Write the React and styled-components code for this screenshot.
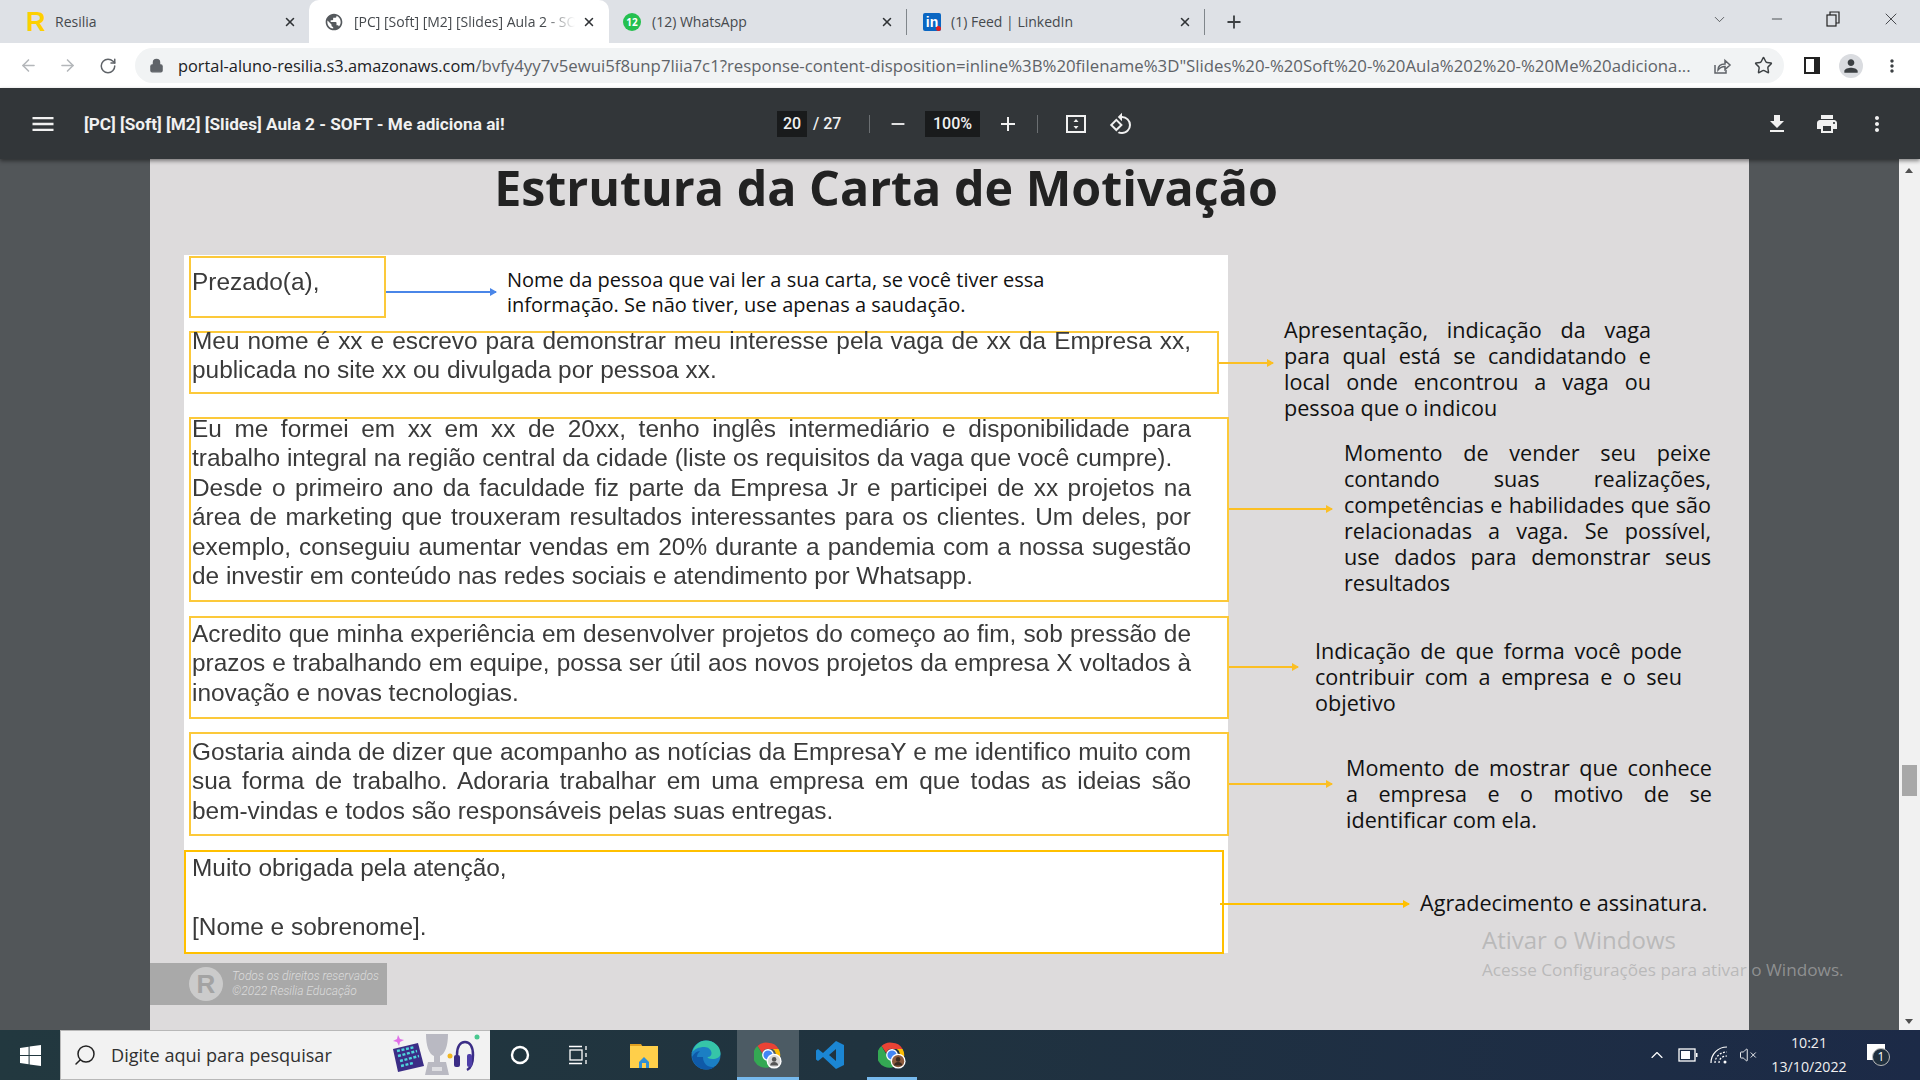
import React from 'react';
import styled, { createGlobalStyle } from 'styled-components';
import { ArrowLeft, ArrowRight, RotateCw, X, Plus, Minus, ChevronDown, ChevronUp, Star, Lock, Search, VolumeX } from 'lucide-react';
import { MdMenu, MdFileDownload, MdPrint, MdMoreVert, MdRemove, MdAdd, MdRotate90DegreesCcw, MdPerson, MdPublic } from 'react-icons/md';

const GlobalStyle = createGlobalStyle`
  html, body {
    margin: 0;
    padding: 0;
    width: 1920px;
    height: 1080px;
    overflow: hidden;
    font-family: "Open Sans", "Liberation Sans", sans-serif;
  }
  * { box-sizing: border-box; }
`;

const Screen = styled.div`
  position: relative;
  width: 1920px;
  height: 1080px;
  display: flex;
  flex-direction: column;
  overflow: hidden;
`;

/* ---- chrome tabs ---- */
const TabStrip = styled.div`
  height: 43px;
  background: #dee1e6;
  display: flex;
  align-items: stretch;
  padding-left: 4px;
`;
const Tab = styled.div`
  position: relative;
  width: ${p => p.$width}px;
  display: flex;
  align-items: center;
  padding-left: ${p => p.$pad}px;
  background: ${p => (p.$active ? '#ffffff' : 'transparent')};
  border-radius: 10px 10px 0 0;
  ${p => p.$divider && `
    &::after {
      content: '';
      position: absolute;
      right: 0;
      top: 9px;
      height: 26px;
      width: 1px;
      background: #80868b;
    }
  `}
`;
const TabTitle = styled.span`
  flex: 1;
  min-width: 0;
  margin-left: ${p => p.$gap || 12}px;
  font-size: 14px;
  color: #45494d;
  white-space: nowrap;
  overflow: hidden;
  ${p => p.$fade && `
    margin-right: 6px;
    -webkit-mask-image: linear-gradient(90deg, #000 86%, transparent);
  `}
`;
const TabClose = styled.span`
  flex: none;
  width: 16px;
  height: 16px;
  margin-right: ${p => p.$right}px;
  display: flex;
  align-items: center;
  justify-content: center;
  color: #303336;
`;
const FavLetter = styled.span`
  width: 18px;
  font-family: "Liberation Sans", sans-serif;
  font-weight: 700;
  font-size: 27px;
  line-height: 24px;
  color: #fdd000;
`;
const NewTab = styled.span`
  margin-left: 19px;
  display: flex;
  align-items: center;
  color: #3c4043;
`;
const WindowControls = styled.div`
  margin-left: auto;
  display: flex;
  align-items: center;
  height: 38px;
  padding-right: 19px;
  gap: 41px;
  color: #2a2d30;
`;

/* ---- address bar ---- */
const AddressBar = styled.div`
  height: 45px;
  background: #ffffff;
  display: flex;
  align-items: center;
  padding-left: 18px;
`;
const NavIcon = styled.span`
  flex: none;
  width: 20px;
  height: 20px;
  margin-left: ${p => p.$left || 0}px;
  display: flex;
  align-items: center;
  justify-content: center;
  color: ${p => p.$color || '#5f6368'};
`;
const Omnibox = styled.div`
  width: 1649px;
  height: 35px;
  margin-left: 17px;
  background: #f1f3f4;
  border-radius: 18px;
  display: flex;
  align-items: center;
  padding: 0 11px 0 14px;
`;
const Url = styled.div`
  flex: 1;
  min-width: 0;
  margin-left: 14px;
  font-size: 16.8px;
  color: #5f6368;
  white-space: nowrap;
  overflow: hidden;
  b {
    font-weight: 400;
    font-size: 16.35px;
    color: #202124;
  }
`;
const SidePanel = styled.span`
  width: 16px;
  height: 17px;
  margin-left: 20px;
  border: 2px solid #222;
  border-right-width: 6px;
  background: #fff;
`;
const Avatar = styled.span`
  width: 24px;
  height: 24px;
  margin-left: 19px;
  border-radius: 50%;
  background: #dadce0;
  display: flex;
  align-items: center;
  justify-content: center;
  color: #3c4043;
`;

/* ---- pdf toolbar ---- */
const PdfBar = styled.div`
  position: relative;
  z-index: 2;
  height: 71px;
  background: #323639;
  box-shadow: 0 2px 4px rgba(0, 0, 0, 0.45);
  display: flex;
  align-items: center;
  color: #f1f1f1;
`;
const PdfLeft = styled.div`
  width: 777px;
  display: flex;
  align-items: center;
  padding-left: 29px;
`;
const DocTitle = styled.span`
  margin-left: 27px;
  font-family: Roboto, sans-serif;
  font-weight: 700;
  font-size: 17.2px;
  white-space: nowrap;
`;
const NumBox = styled.span`
  width: ${p => p.$width}px;
  height: 26px;
  margin-left: ${p => p.$left || 0}px;
  background: #191b1c;
  display: flex;
  align-items: center;
  justify-content: center;
  font-family: Roboto, sans-serif;
  font-weight: 500;
  font-size: 16px;
`;
const PageCount = styled.span`
  margin-left: 6px;
  width: 32px;
  font-family: Roboto, sans-serif;
  font-weight: 500;
  font-size: 16px;
  white-space: nowrap;
`;
const BarDivider = styled.span`
  width: 1px;
  height: 18px;
  margin-left: ${p => p.$left}px;
  background: #6b6f72;
`;
const BarIcon = styled.span`
  width: ${p => p.$size || 24}px;
  height: ${p => p.$size || 24}px;
  margin-left: ${p => p.$left || 0}px;
  display: flex;
  align-items: center;
  justify-content: center;
`;
const PdfRight = styled.div`
  margin-left: auto;
  padding-right: 31px;
  display: flex;
  align-items: center;
  gap: 26px;
`;

/* ---- pdf viewer ---- */
const Viewer = styled.div`
  height: 871px;
  display: flex;
`;
const ViewerBody = styled.div`
  flex: 1;
  background: #525659;
  padding-left: 150px;
`;
const Page = styled.div`
  position: relative;
  width: 1599px;
  height: 871px;
  background: #dddbdc;
  overflow: hidden;
`;
const SlideTitle = styled.h1`
  margin: 0;
  height: 56px;
  width: 1472px;
  text-align: center;
  font-family: "Open Sans", sans-serif;
  font-weight: 700;
  font-size: 48.4px;
  line-height: 56px;
  color: #222222;
  white-space: nowrap;
`;
const Slide = styled.div`
  position: relative;
  margin-top: 41px;
  &::before {
    content: '';
    position: absolute;
    left: 34px;
    top: -1px;
    width: 1044px;
    height: 698px;
    background: #ffffff;
  }
`;
const Row = styled.div`
  position: relative;
  height: ${p => p.$height}px;
  margin-top: ${p => p.$top}px;
  padding-left: ${p => p.$inset}px;
  display: flex;
  align-items: center;
`;
const LetterBox = styled.div`
  flex: none;
  align-self: stretch;
  width: ${p => p.$width}px;
  border: 2px solid ${p => p.$color || '#fcc93a'};
  padding-left: ${p => p.$textLeft || 1}px;
`;
const LetterText = styled.div`
  margin-top: ${p => p.$offset}px;
  width: 999px;
  font-family: "Liberation Sans", Arial, sans-serif;
  font-size: 24.4px;
  line-height: 29.4px;
  color: #3a3a3a;
  filter: blur(0.3px);
`;
const TextLine = styled.div`
  white-space: nowrap;
  text-align: ${p => (p.$justify ? 'justify' : 'left')};
  text-align-last: ${p => (p.$justify ? 'justify' : 'left')};
`;
const Arrow = styled.div`
  position: relative;
  flex: none;
  width: ${p => p.$width}px;
  height: 2px;
  margin-left: ${p => p.$left || 0}px;
  margin-top: ${p => p.$shift || 0}px;
  background: ${p => p.$color};
  &::after {
    content: '';
    position: absolute;
    right: -1px;
    top: -3px;
    border-left: 7px solid ${p => p.$color};
    border-top: 4px solid transparent;
    border-bottom: 4px solid transparent;
  }
`;
const Note = styled.div`
  flex: none;
  width: ${p => p.$width}px;
  margin-left: ${p => p.$left}px;
  margin-top: ${p => p.$shift || 0}px;
  font-size: ${p => p.$size || 21.6}px;
  line-height: ${p => p.$leading || 26}px;
  color: #111111;
`;
const Badge = styled.div`
  position: absolute;
  left: 0;
  top: 804px;
  width: 237px;
  height: 42px;
  background: #a9a9a9;
  display: flex;
  align-items: center;
  padding-left: 39px;
`;
const BadgeLogo = styled.span`
  width: 34px;
  height: 34px;
  border-radius: 50%;
  background: #cbcbcb;
  color: #a3a3a3;
  display: flex;
  align-items: center;
  justify-content: center;
  font-family: "Liberation Sans", sans-serif;
  font-weight: 700;
  font-size: 26px;
`;
const BadgeText = styled.div`
  margin-left: 9px;
  font-family: Roboto, sans-serif;
  font-style: italic;
  font-weight: 300;
  font-size: 12px;
  line-height: 15px;
  color: #dcdcdc;
  white-space: nowrap;
`;
const Scrollbar = styled.div`
  position: relative;
  width: 21px;
  background: #f1f1f1;
`;
const ScrollArrow = styled.span`
  position: absolute;
  left: 6px;
  ${p => (p.$up ? 'top: 9px;' : 'bottom: 6px;')}
  border-left: 4.5px solid transparent;
  border-right: 4.5px solid transparent;
  ${p => (p.$up ? 'border-bottom' : 'border-top')}: 5px solid #505050;
`;
const ScrollThumb = styled.span`
  position: absolute;
  left: 3px;
  top: 606px;
  width: 15px;
  height: 31px;
  background: #a8a8a8;
`;
const Watermark = styled.div`
  position: absolute;
  left: 1482px;
  top: 922px;
  z-index: 3;
  font-size: 24px;
  line-height: 36px;
  color: rgba(170, 170, 170, 0.7);
  white-space: nowrap;
  pointer-events: none;
  small {
    display: block;
    font-size: 17.2px;
    line-height: 24px;
  }
`;

/* ---- taskbar ---- */
const Taskbar = styled.div`
  height: 50px;
  background: linear-gradient(90deg, #22383f, #20333f 45%, #1c2a47);
  display: flex;
  align-items: stretch;
`;
const StartButton = styled.div`
  width: 60px;
  display: flex;
  align-items: center;
  justify-content: center;
`;
const SearchBox = styled.div`
  width: 430px;
  background: #f2f2f2;
  border: 1px solid #b8b8b8;
  border-width: 1px 0 1px 1px;
  display: flex;
  align-items: center;
  padding-left: 12px;
  color: #222;
  overflow: hidden;
`;
const SearchHint = styled.span`
  margin-left: 14px;
  font-size: 18.1px;
  color: #303030;
  white-space: nowrap;
`;
const TaskSlot = styled.div`
  position: relative;
  width: ${p => p.$width}px;
  margin-left: ${p => p.$left || 0}px;
  display: flex;
  align-items: center;
  justify-content: center;
  background: ${p => (p.$active ? '#4c5b64' : 'transparent')};
  ${p => p.$bar && `
    &::after {
      content: '';
      position: absolute;
      left: ${p.$active ? 0 : 6}px;
      right: ${p.$active ? 0 : 6}px;
      bottom: 0;
      height: 3px;
      background: #76b9ed;
    }
  `}
`;
const Tray = styled.div`
  margin-left: auto;
  padding-right: 25px;
  display: flex;
  align-items: center;
  color: #ffffff;
`;
const TraySlot = styled.span`
  width: ${p => p.$width || 31}px;
  display: flex;
  align-items: center;
  justify-content: center;
`;
const Clock = styled.div`
  width: 88px;
  margin: 0 4px 0 3px;
  text-align: center;
  font-size: 14.2px;
  line-height: 24px;
  color: #f0f0f0;
`;
const NotifyCount = styled.span`
  position: absolute;
  right: -5px;
  bottom: -6px;
  width: 18px;
  height: 18px;
  border-radius: 50%;
  background: #20303f;
  border: 1px solid #bbb;
  color: #fff;
  font-size: 12px;
  line-height: 16px;
  text-align: center;
`;
const NotifyIcon = styled.span`
  position: relative;
  display: block;
  width: 18px;
  height: 16px;
  background: #fff;
  margin-top: -6px;
`;

const GOLD = '#fbbf24';

const rows = [
  {
    height: 62, top: 0, inset: 39, boxWidth: 197, textTop: 9,
    lines: [['Prezado(a),']],
    arrow: { width: 110, color: '#4a86e8', shift: 9 },
    note: {
      width: 560, left: 11, size: 20, leading: 24.5, shift: 11,
      lines: [['Nome da pessoa que vai ler a sua carta, se você tiver essa'], ['informação. Se não tiver, use apenas a saudação.']],
    },
  },
  {
    height: 63, top: 13, inset: 39, boxWidth: 1030, textTop: -7,
    lines: [['Meu nome é xx e escrevo para demonstrar meu interesse pela vaga de xx da Empresa xx,', true], ['publicada no site xx ou divulgada por pessoa xx.']],
    arrow: { width: 54, color: GOLD },
    note: {
      width: 367, left: 11, shift: 12,
      lines: [['Apresentação, indicação da vaga', true], ['para qual está se candidatando e', true], ['local onde encontrou a vaga ou', true], ['pessoa que o indicou']],
    },
  },
  {
    height: 185, top: 23, inset: 39, boxWidth: 1040, textTop: -5,
    lines: [
      ['Eu me formei em xx em xx de 20xx, tenho inglês intermediário e disponibilidade para', true],
      ['trabalho integral na região central da cidade (liste os requisitos da vaga que você cumpre).'],
      ['Desde o primeiro ano da faculdade fiz parte da Empresa Jr e participei de xx projetos na', true],
      ['área de marketing que trouxeram resultados interessantes para os clientes. Um deles, por', true],
      ['exemplo, conseguiu aumentar vendas em 20% durante a pandemia com a nossa sugestão', true],
      ['de investir em conteúdo nas redes sociais e atendimento por Whatsapp.'],
    ],
    arrow: { width: 103, color: GOLD, shift: -2 },
    note: {
      width: 367, left: 12, shift: 17,
      lines: [['Momento de vender seu peixe', true], ['contando suas realizações,', true], ['competências e habilidades que são', true], ['relacionadas a vaga. Se possível,', true], ['use dados para demonstrar seus', true], ['resultados']],
    },
  },
  {
    height: 103, top: 14, inset: 39, boxWidth: 1040, textTop: 1,
    lines: [
      ['Acredito que minha experiência em desenvolver projetos do começo ao fim, sob pressão de', true],
      ['prazos e trabalhando em equipe, possa ser útil aos novos projetos da empresa X voltados à', true],
      ['inovação e novas tecnologias.'],
    ],
    arrow: { width: 69, color: GOLD, shift: -2 },
    note: {
      width: 367, left: 17, shift: 19,
      lines: [['Indicação de que forma você pode', true], ['contribuir com a empresa e o seu', true], ['objetivo']],
    },
  },
  {
    height: 104, top: 13, inset: 39, boxWidth: 1040, textTop: 3,
    lines: [
      ['Gostaria ainda de dizer que acompanho as notícias da EmpresaY e me identifico muito com', true],
      ['sua forma de trabalho. Adoraria trabalhar em uma empresa em que todas as ideias são', true],
      ['bem-vindas e todos são responsáveis pelas suas entregas.'],
    ],
    arrow: { width: 103, color: GOLD },
    note: {
      width: 366, left: 14, shift: 19,
      lines: [['Momento de mostrar que conhece', true], ['a empresa e o motivo de se', true], ['identificar com ela.']],
    },
  },
  {
    height: 104, top: 14, inset: 34, boxWidth: 1040, color: '#ffc000', textTop: 1, textLeft: 6,
    lines: [['Muito obrigada pela atenção,'], ['\u00a0'], ['[Nome e sobrenome].']],
    arrow: { width: 189, left: -4, color: '#ffc000', shift: 3 },
    note: { width: 300, left: 11, shift: 2, lines: [['Agradecimento e assinatura.']] },
  },
];

const ChromeIcon = ({ size = 28, badge }) => (
  <svg width={size} height={size} viewBox="0 0 32 32">
    <path d="M16 2a14 14 0 0 1 12.1 7H16a7 7 0 0 0-6.6 4.6L4 5.8A14 14 0 0 1 16 2z" fill="#ea4335" />
    <path d="M28.1 9A14 14 0 0 1 17 30l6-10.2A7 7 0 0 0 21.5 9z" fill="#fbbc05" />
    <path d="M17 30A14 14 0 0 1 4 5.8l6.2 10.6a7 7 0 0 0 8 5.4z" fill="#34a853" />
    <circle cx="16" cy="16" r="6" fill="#4285f4" stroke="#fff" strokeWidth="1.5" />
    <circle cx="23" cy="23" r="8.5" fill="#fff" />
    <circle cx="23" cy="23" r="7" fill={badge} />
    <circle cx="23" cy="21" r="2.6" fill={badge === '#8c5a3c' ? '#3a2a20' : '#555'} />
    <path d="M18.5 28a4.5 4 0 0 1 9 0z" fill={badge === '#8c5a3c' ? '#3a2a20' : '#555'} />
  </svg>
);

const WinLogo = () => (
  <svg width="21" height="21" viewBox="0 0 21 21" fill="#fff">
    <path d="M0 3l8.6-1.2v8.2H0zM9.6 1.6L21 0v10H9.6zM0 11h8.6v8.2L0 18zM9.6 11H21v10L9.6 19.4z" />
  </svg>
);

const TaskView = () => (
  <svg width="20" height="20" viewBox="0 0 20 20" fill="none" stroke="#fff" strokeWidth="1.3">
    <rect x="1" y="5" width="12" height="10" />
    <path d="M0 1.5h13M0 18.5h13M17 1v4M17 8v4M17 15v4" />
  </svg>
);

const Folder = () => (
  <svg width="28" height="26" viewBox="0 0 28 26">
    <path d="M0 2h11l2 3H0z" fill="#e0a020" />
    <rect y="4" width="28" height="22" fill="#ffcf4a" />
    <path d="M9 20l5-5 5 5v6H9z" fill="#2f8fd8" />
    <rect x="12" y="21" width="4" height="5" fill="#ffcf4a" />
  </svg>
);

const Edge = () => (
  <svg width="30" height="30" viewBox="0 0 30 30">
    <circle cx="15" cy="15" r="14.5" fill="#1b7fc4" />
    <path d="M1 13C3 5 9 .5 15 .5c8 0 14.500 6 14.500 13 0 4-4 5.500-8 5.500-3 0-5-1-5-2 3 0 4-2 4-4 0-3-3-6-7-6-6 0-10 2-13 6z" fill="#36c5a8" />
    <path d="M12 17c0 6 4 10 9 10 1 0 2 0 3-.5-3 2.500-6 3-9 3C8 29.500 2 24 1 17c2-4 5-6 8-6-2 2-3 3.500-3 6z" fill="#0f5aa8" />
  </svg>
);

const VsCode = () => (
  <svg width="30" height="30" viewBox="0 0 30 30" fill="#1b86d3">
    <path d="M21 1l8 4v20l-8 4-13-12-5 4-2-1.500V10.500L3 9l5 4zM21 9l-7 6 7 6z" />
  </svg>
);

const SearchArt = () => (
  <svg width="92" height="44" viewBox="0 0 92 44" style={{ marginLeft: 58, flex: 'none' }}>
    <path d="M8 2l2 4 4 1-4 2-1 4-2-4-4-1 4-2z" fill="#e070e8" />
    <path d="M3 16l25-6 6 23-26 6z" fill="#3b2d86" />
    <path d="M7 18l18-4M8 23l19-5M10 28l19-5M11 33l12-3" stroke="#4fd6dc" strokeWidth="2.4" strokeDasharray="3 1.600" />
    <path d="M36 1h22c0 12-3 20-8 22v6h6l3 13H35l3-13h6v-6C39 21 36 13 36 1z" fill="#b9b9c2" />
    <rect x="42" y="34" width="10" height="4" fill="#dedee2" />
    <circle cx="60" cy="23" r="2.500" fill="#f2b51e" />
    <path d="M67 22c0-8 3-13 8-13s8 5 8 13c0 8-2 13-6 15" fill="none" stroke="#3b2d86" strokeWidth="2.500" />
    <rect x="64" y="22" width="6" height="12" rx="2" fill="#3b2d86" />
    <rect x="77" y="21" width="5" height="13" rx="2" fill="#4f3fa8" />
    <circle cx="87" cy="4" r="2.500" fill="#48c78e" />
  </svg>
);

const FitPage = () => (
  <svg width="22" height="22" viewBox="0 0 22 22" fill="none">
    <rect x="2" y="3" width="18" height="16" stroke="#f1f1f1" strokeWidth="2" />
    <path d="M11 6l2.500 3h-5zM11 16l-2.500-3h5z" fill="#f1f1f1" />
  </svg>
);

const ShareIcon = () => (
  <svg width="20" height="20" viewBox="0 0 20 20" fill="none" stroke="#5f6368" strokeWidth="1.500">
    <path d="M3 9v8h11v-3" />
    <path d="M6 14c0-4 3-6 7-6V4.500L18 9l-5 4.500V10.500c-3 0-5 1-7 3.500z" />
  </svg>
);

const Battery = () => (
  <svg width="20" height="14" viewBox="0 0 20 14">
    <rect x="1" y="1" width="16" height="12" fill="none" stroke="#fff" strokeWidth="1.300" />
    <rect x="3" y="3" width="9" height="8" fill="#fff" />
    <rect x="18" y="5" width="1.500" height="4" fill="#fff" />
  </svg>
);

const WifiArcs = () => (
  <svg width="20" height="20" viewBox="0 0 20 20" fill="none" stroke="#fff" strokeWidth="1.200">
    <path d="M2 18C2 9 9 2 18 2" />
    <path d="M6 18c0-6 5-11 12-11" strokeDasharray="2 1.500" />
    <path d="M10 18c0-4 3-7 8-7" strokeDasharray="2 1.500" />
    <circle cx="16" cy="17" r="1.500" fill="#fff" stroke="none" />
  </svg>
);

const App = () => (
  <Screen>
    <GlobalStyle />
    <TabStrip>
      <Tab $width={305} $pad={22}>
        <FavLetter>R</FavLetter>
        <TabTitle $gap={11}>Resilia</TabTitle>
        <TabClose $right={11}><X size={14} strokeWidth={2.6} /></TabClose>
      </Tab>
      <Tab $width={300} $pad={15} $active>
        <MdPublic size={20} color="#55595d" />
        <TabTitle $gap={10} $fade>[PC] [Soft] [M2] [Slides] Aula 2 - SOFT - Me adiciona ai!</TabTitle>
        <TabClose $right={12}><X size={14} strokeWidth={2.6} /></TabClose>
      </Tab>
      <Tab $width={298} $pad={14} $divider>
        <svg width="18" height="18" viewBox="0 0 18 18">
          <circle cx="9" cy="9" r="9" fill="#25c04f" />
          <text x="9" y="12.500" textAnchor="middle" fontSize="10" fontWeight="700" fill="#fff" fontFamily="Open Sans">12</text>
        </svg>
        <TabTitle $gap={11}>(12) WhatsApp</TabTitle>
        <TabClose $right={12}><X size={14} strokeWidth={2.6} /></TabClose>
      </Tab>
      <Tab $width={298} $pad={16} $divider>
        <svg width="18" height="18" viewBox="0 0 18 18">
          <rect width="18" height="18" rx="2" fill="#0a66c2" />
          <text x="9" y="14" textAnchor="middle" fontSize="14" fontWeight="700" fill="#fff" fontFamily="Liberation Sans">in</text>
          <circle cx="15.500" cy="15.500" r="2.500" fill="#e02020" />
        </svg>
        <TabTitle $gap={10}>(1) Feed | LinkedIn</TabTitle>
        <TabClose $right={12}><X size={14} strokeWidth={2.6} /></TabClose>
      </Tab>
      <NewTab><Plus size={20} strokeWidth={2.2} /></NewTab>
      <WindowControls>
        <ChevronDown size={17} strokeWidth={1} />
        <Minus size={16} strokeWidth={1.2} />
        <svg width="14" height="16" viewBox="0 0 14 16" fill="none" stroke="#222" strokeWidth="1.2">
          <rect x="1" y="4" width="9" height="11" />
          <path d="M4 4V1h9v11h-3" />
        </svg>
        <X size={20} strokeWidth={1} />
      </WindowControls>
    </TabStrip>

    <AddressBar>
      <NavIcon $color="#b4b7ba"><ArrowLeft size={19} strokeWidth={2} /></NavIcon>
      <NavIcon $left={19} $color="#b4b7ba"><ArrowRight size={19} strokeWidth={2} /></NavIcon>
      <NavIcon $left={21}><RotateCw size={18} strokeWidth={2} /></NavIcon>
      <Omnibox>
        <Lock size={15} color="#5f6368" fill="#5f6368" />
        <Url>
          <b>portal-aluno-resilia.s3.amazonaws.com</b>
          /bvfy4yy7v5ewui5f8unp7liia7c1?response-content-disposition=inline%3B%20filename%3D"Slides%20-%20Soft%20-%20Aula%202%20-%20Me%20adiciona...
        </Url>
        <NavIcon $left={20}><ShareIcon /></NavIcon>
        <NavIcon $left={21} $color="#3c4043"><Star size={19} strokeWidth={1.8} /></NavIcon>
      </Omnibox>
      <SidePanel />
      <Avatar><MdPerson size={20} /></Avatar>
      <NavIcon $left={19} $color="#3c4043"><MdMoreVert size={22} /></NavIcon>
    </AddressBar>

    <PdfBar>
      <PdfLeft>
        <MdMenu size={28} />
        <DocTitle>[PC] [Soft] [M2] [Slides] Aula 2 - SOFT - Me adiciona ai!</DocTitle>
      </PdfLeft>
      <NumBox $width={30}>20</NumBox>
      <PageCount>/ 27</PageCount>
      <BarDivider $left={24} />
      <BarIcon $left={16}><MdRemove size={22} /></BarIcon>
      <NumBox $width={55} $left={15}>100%</NumBox>
      <BarIcon $left={16}><MdAdd size={24} /></BarIcon>
      <BarDivider $left={17} />
      <BarIcon $left={26}><FitPage /></BarIcon>
      <BarIcon $left={21}><MdRotate90DegreesCcw size={24} /></BarIcon>
      <PdfRight>
        <MdFileDownload size={24} />
        <MdPrint size={24} />
        <MdMoreVert size={24} />
      </PdfRight>
    </PdfBar>

    <Viewer>
      <ViewerBody>
        <Page>
          <SlideTitle>Estrutura da Carta de Motivação</SlideTitle>
          <Slide>
            {rows.map(row => (
              <Row key={row.lines[0][0]} $height={row.height} $top={row.top} $inset={row.inset}>
                <LetterBox $width={row.boxWidth} $textLeft={row.textLeft} $color={row.color}>
                  <LetterText $offset={row.textTop}>
                    {row.lines.map(([text, justify], i) => (
                      <TextLine key={i} $justify={justify}>{text}</TextLine>
                    ))}
                  </LetterText>
                </LetterBox>
                <Arrow $width={row.arrow.width} $left={row.arrow.left} $color={row.arrow.color} $shift={row.arrow.shift} />
                <Note $width={row.note.width} $left={row.note.left} $shift={row.note.shift} $leading={row.note.leading} $size={row.note.size}>
                  {row.note.lines.map(([text, justify], i) => (
                    <TextLine key={i} $justify={justify}>{text}</TextLine>
                  ))}
                </Note>
              </Row>
            ))}
          </Slide>
          <Badge>
            <BadgeLogo>R</BadgeLogo>
            <BadgeText>Todos os direitos reservados<br />©2022 Resilia Educação</BadgeText>
          </Badge>
        </Page>
      </ViewerBody>
      <Scrollbar>
        <ScrollArrow $up />
        <ScrollThumb />
        <ScrollArrow />
      </Scrollbar>
    </Viewer>

    <Watermark>
      Ativar o Windows
      <small>Acesse Configurações para ativar o Windows.</small>
    </Watermark>

    <Taskbar>
      <StartButton><WinLogo /></StartButton>
      <SearchBox>
        <Search size={24} strokeWidth={1.5} style={{ transform: 'scaleX(-1)' }} />
        <SearchHint>Digite aqui para pesquisar</SearchHint>
        <SearchArt />
      </SearchBox>
      <TaskSlot $width={60}>
        <svg width="20" height="20" viewBox="0 0 20 20" fill="none" stroke="#fff" strokeWidth="2.4"><circle cx="10" cy="10" r="8" /></svg>
      </TaskSlot>
      <TaskSlot $width={58}><TaskView /></TaskSlot>
      <TaskSlot $width={62} $left={5}><Folder /></TaskSlot>
      <TaskSlot $width={62}><Edge /></TaskSlot>
      <TaskSlot $width={62} $active $bar><ChromeIcon badge="#d8d8d8" /></TaskSlot>
      <TaskSlot $width={62}><VsCode /></TaskSlot>
      <TaskSlot $width={62} $bar><ChromeIcon badge="#8c5a3c" /></TaskSlot>
      <Tray>
        <TraySlot><ChevronUp size={20} strokeWidth={1.4} /></TraySlot>
        <TraySlot><Battery /></TraySlot>
        <TraySlot><WifiArcs /></TraySlot>
        <TraySlot $width={28}><VolumeX size={18} strokeWidth={1.2} /></TraySlot>
        <Clock>10:21<br />13/10/2022</Clock>
        <TraySlot $width={38}>
          <NotifyIcon><NotifyCount>1</NotifyCount></NotifyIcon>
        </TraySlot>
      </Tray>
    </Taskbar>
  </Screen>
);

export default App;
